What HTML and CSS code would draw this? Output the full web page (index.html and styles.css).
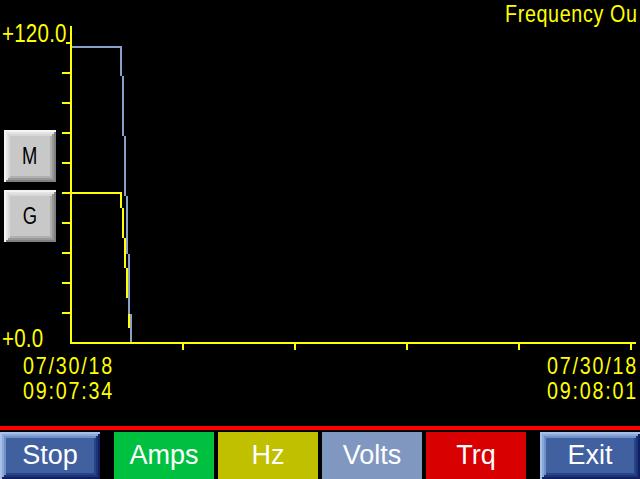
FILE: index.html
```html
<!DOCTYPE html>
<html>
<head>
<meta charset="utf-8">
<link rel="stylesheet" href="styles.css">
</head>
<body>
<div class="screen">
  <div class="chart">
    <svg class="plot" width="640" height="426" viewBox="0 0 640 426" shape-rendering="crispEdges">
      <g fill="#ffff00">
        <rect x="70" y="26" width="2" height="318"/>
        <rect x="66" y="42" width="4" height="2"/>
        <rect x="62" y="72" width="8" height="2"/>
        <rect x="62" y="102" width="8" height="2"/>
        <rect x="62" y="132" width="8" height="2"/>
        <rect x="62" y="162" width="8" height="2"/>
        <rect x="62" y="192" width="8" height="2"/>
        <rect x="62" y="222" width="8" height="2"/>
        <rect x="62" y="252" width="8" height="2"/>
        <rect x="62" y="282" width="8" height="2"/>
        <rect x="62" y="312" width="8" height="2"/>
        <rect x="70" y="342" width="566" height="2"/>
        <rect x="182" y="344" width="2" height="6"/>
        <rect x="294" y="344" width="2" height="6"/>
        <rect x="406" y="344" width="2" height="6"/>
        <rect x="518" y="344" width="2" height="6"/>
        <rect x="630" y="344" width="2" height="6"/>
      </g>
      <g fill="#ffff00">
        <rect x="72" y="192" width="50" height="2"/>
        <rect x="120" y="192" width="2" height="16"/>
        <rect x="122" y="208" width="2" height="30"/>
        <rect x="124" y="238" width="2" height="30"/>
        <rect x="126" y="268" width="2" height="30"/>
        <rect x="128" y="298" width="2" height="30"/>
        <rect x="130" y="328" width="2" height="14"/>
      </g>
      <g fill="#8aa0c8">
        <rect x="72" y="46" width="50" height="2"/>
        <rect x="120" y="46" width="2" height="30"/>
        <rect x="122" y="76" width="2" height="60"/>
        <rect x="124" y="136" width="2" height="60"/>
        <rect x="126" y="196" width="2" height="58"/>
        <rect x="128" y="254" width="2" height="60"/>
        <rect x="130" y="314" width="2" height="28"/>
      </g>
    </svg>
    <div class="title"><span class="narrow">Frequency Ou</span></div>
    <div class="yaxis">
      <span class="ylabel narrow">+120.0</span>
      <div class="side-buttons">
        <div class="key"><span class="narrow-c">M</span></div>
        <div class="key"><span class="narrow-c">G</span></div>
      </div>
      <span class="ylabel ymin narrow">+0.0</span>
    </div>
    <div class="stamps">
      <div class="stamp">
        <div class="line"><span class="narrow">07/30/18</span></div>
        <div class="line"><span class="narrow">09:07:34</span></div>
      </div>
      <div class="stamp stamp-end">
        <div class="line"><span class="narrow-r">07/30/18</span></div>
        <div class="line"><span class="narrow-r">09:08:01</span></div>
      </div>
    </div>
  </div>
  <div class="divider"></div>
  <div class="toolbar">
    <div class="tbtn bevel">Stop</div>
    <div class="tbtn amps">Amps</div>
    <div class="tbtn hz">Hz</div>
    <div class="tbtn volts">Volts</div>
    <div class="tbtn trq">Trq</div>
    <div class="tbtn bevel">Exit</div>
  </div>
</div>
</body>
</html>
```
FILE: styles.css
```css
html, body {
  margin: 0;
  padding: 0;
  background: #000;
}
.screen {
  width: 640px;
  height: 479px;
  overflow: hidden;
  background: #000;
  font-family: "Liberation Sans", sans-serif;
  color: #ffff00;
}
.narrow {
  display: inline-block;
  transform: scaleX(0.82);
  transform-origin: left center;
}
.narrow-r {
  display: inline-block;
  transform: scaleX(0.82);
  transform-origin: right center;
}
.narrow-c {
  display: inline-block;
  transform: scaleX(0.8);
  transform-origin: center center;
}
.chart {
  position: relative;
  height: 426px;
  padding-top: 2px;
  box-sizing: border-box;
}
.plot {
  position: absolute;
  left: 0;
  top: 0;
  display: block;
}
.title {
  position: relative;
  height: 19px;
  padding-left: 505px;
  font-size: 24px;
  line-height: 24px;
  white-space: nowrap;
  letter-spacing: 0.8px;
}
.yaxis {
  position: relative;
  width: 70px;
  display: flex;
  flex-direction: column;
  align-items: flex-start;
}
.ylabel {
  font-size: 25px;
  line-height: 25px;
  margin-left: 2px;
  letter-spacing: 0.3px;
}
.side-buttons {
  margin-top: 84px;
  margin-left: 4px;
  display: flex;
  flex-direction: column;
  gap: 8px;
}
.key {
  width: 52px;
  height: 52px;
  box-sizing: border-box;
  background: #c8c8c8;
  color: #000;
  font-size: 23px;
  display: flex;
  align-items: center;
  justify-content: center;
  box-shadow:
    inset 2px 2px 0 #f4f4f4,
    inset -2px -2px 0 #808080,
    inset 4px 4px 0 #e4e4e4,
    inset -4px -4px 0 #989898,
    inset 6px 6px 0 #d8d8d8,
    inset -6px -6px 0 #b0b0b0;
}
.ymin {
  margin-top: 84px;
}
.stamps {
  position: relative;
  display: flex;
  justify-content: space-between;
  margin-top: 2px;
  padding: 0 2px 0 23px;
  font-size: 24px;
  letter-spacing: 2.2px;
}
.stamp-end {
  text-align: right;
}
.line {
  height: 25px;
  line-height: 25px;
  white-space: nowrap;
}
.divider {
  height: 4px;
  background: #ff0000;
  margin-bottom: 2px;
}
.toolbar {
  display: flex;
  height: 47px;
}
.tbtn {
  width: 100px;
  height: 47px;
  box-sizing: border-box;
  display: flex;
  align-items: center;
  justify-content: center;
  color: #fff;
  font-size: 27px;
  margin-left: 4px;
}
.tbtn:first-child {
  margin-left: 0;
}
.tbtn.amps {
  margin-left: 14px;
  background: #00c040;
}
.tbtn.hz {
  background: #c0c000;
}
.tbtn.volts {
  background: #8098c0;
}
.tbtn.trq {
  background: #d80000;
}
.tbtn.bevel {
  background: #4060a0;
  box-shadow:
    inset 2px 2px 0 #a8c0e8,
    inset -2px -2px 0 #102060,
    inset 4px 4px 0 #8ca8d8,
    inset -4px -4px 0 #1c3478,
    inset 6px 6px 0 #7090c8,
    inset -6px -6px 0 #28448c;
}
.tbtn.bevel:last-child {
  margin-left: 14px;
}
```
